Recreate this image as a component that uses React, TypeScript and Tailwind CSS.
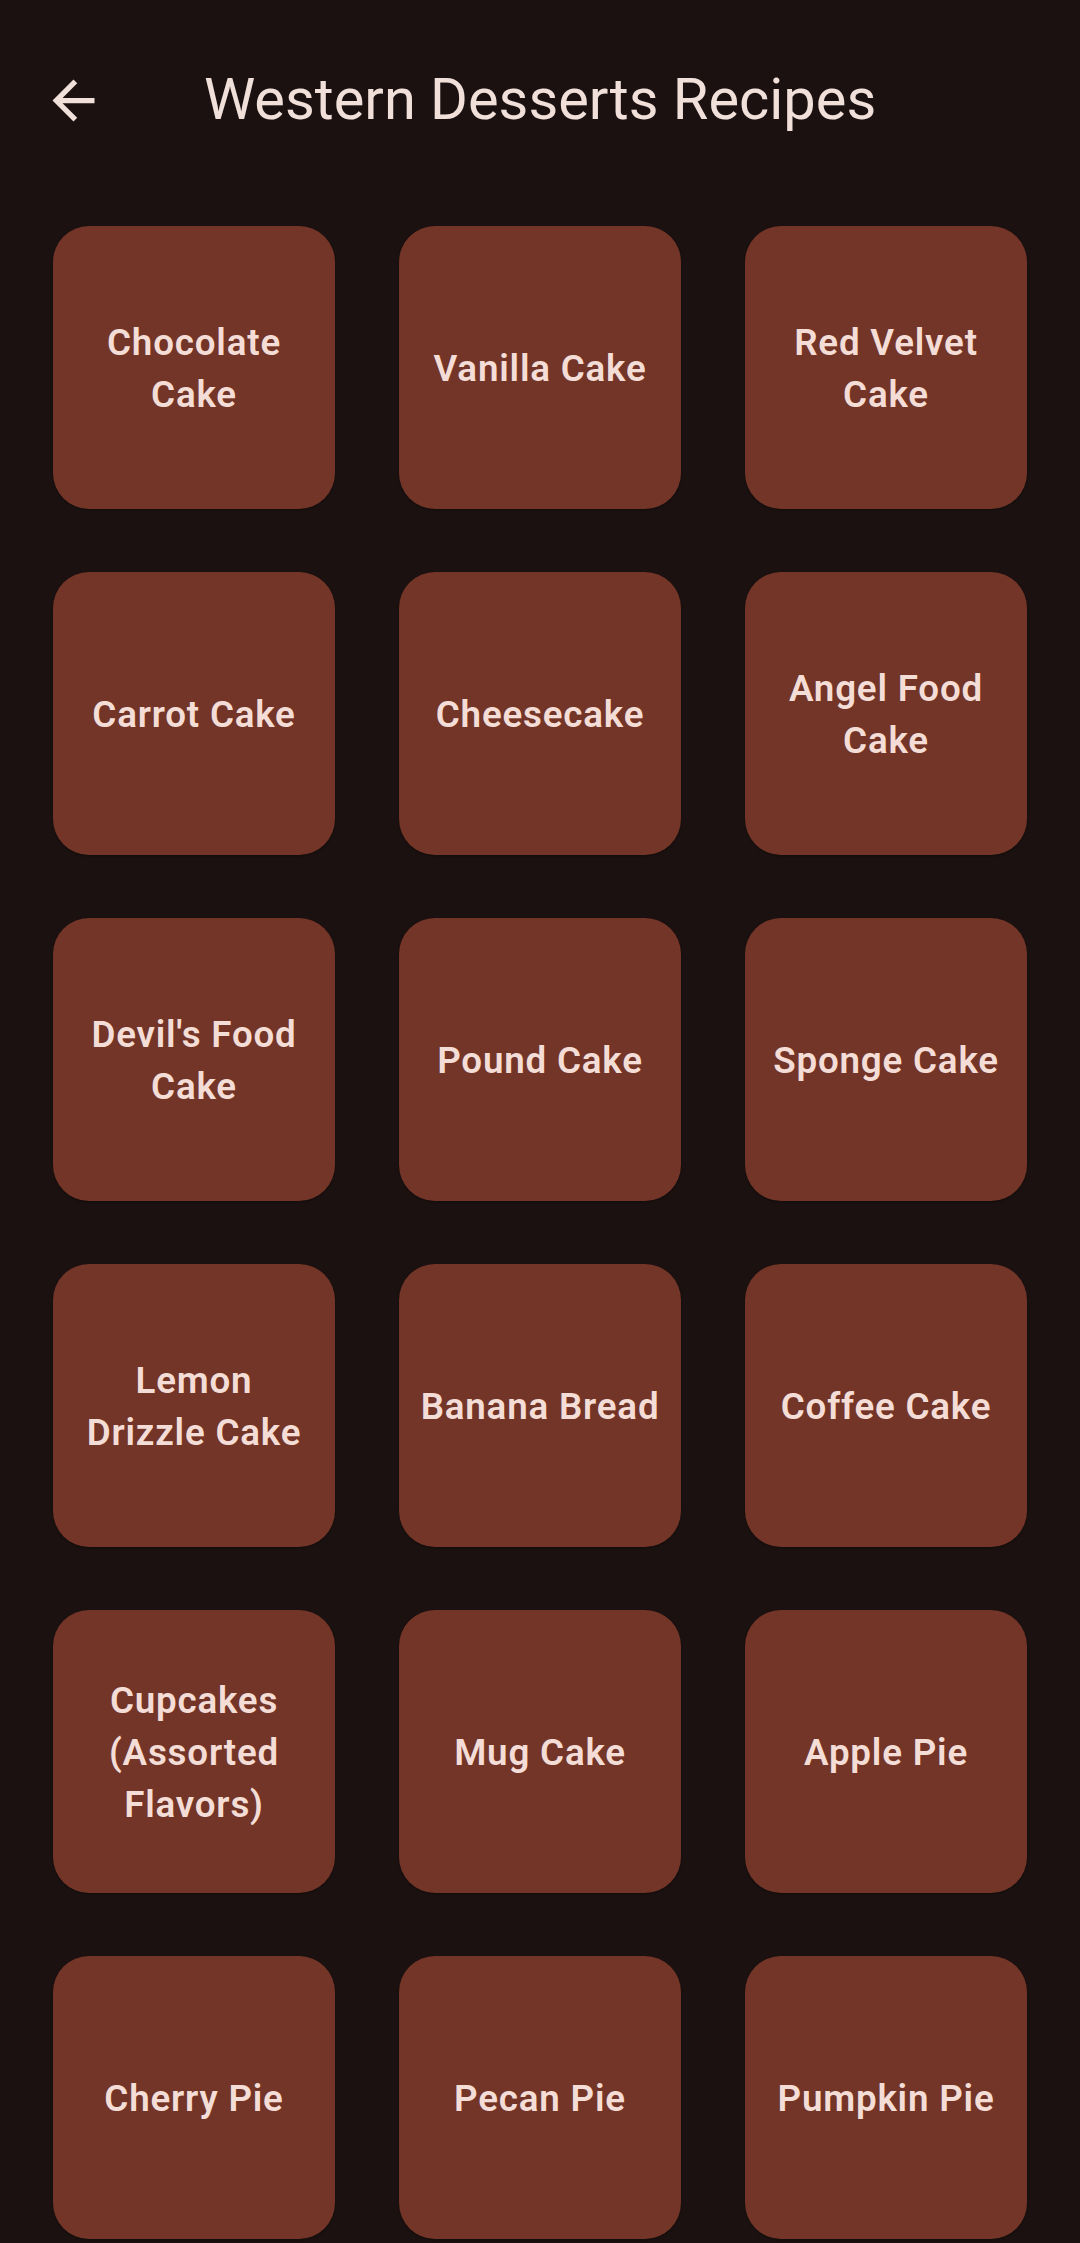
const recipes = [
  "Chocolate Cake",
  "Vanilla Cake",
  "Red Velvet Cake",
  "Carrot Cake",
  "Cheesecake",
  "Angel Food Cake",
  "Devil's Food Cake",
  "Pound Cake",
  "Sponge Cake",
  "Lemon Drizzle Cake",
  "Banana Bread",
  "Coffee Cake",
  "Cupcakes (Assorted Flavors)",
  "Mug Cake",
  "Apple Pie",
  "Cherry Pie",
  "Pecan Pie",
  "Pumpkin Pie",
];

export default function App() {
  return (
    <div
      className="min-h-[2243px] w-[1080px] bg-[#1a1110] text-[#f1dfda] overflow-hidden"
      style={{ fontFamily: "Roboto, 'Noto Sans', sans-serif" }}
    >
      {/* Top app bar */}
      <header className="flex h-[200px] items-center">
        <button className="ml-[42px] flex h-[63px] w-[63px] items-center justify-center">
          <svg viewBox="0 0 24 24" className="h-[63px] w-[63px]" fill="#f1dfda">
            <path d="M20 11H7.83l5.59-5.59L12 4l-8 8 8 8 1.41-1.41L7.83 13H20v-2z" />
          </svg>
        </button>
        <h1 className="ml-[99px] text-[57.75px] font-normal leading-none">
          Western Desserts Recipes
        </h1>
      </header>

      {/* Recipe grid */}
      <div className="grid grid-cols-3 gap-x-16 gap-y-[63px] px-[53px] pt-[26px]">
        {recipes.map((name) => (
          <div
            key={name}
            className="flex h-[283px] items-center justify-center rounded-[36px] bg-[#733527] px-5 pt-[3px] shadow-[0_1px_2px_rgba(0,0,0,0.3)]"
          >
            <span className="text-center text-[36.75px] font-semibold leading-[52px] tracking-[0.8px] text-[#f4ddd6]">
              {name}
            </span>
          </div>
        ))}
      </div>
    </div>
  );
}
